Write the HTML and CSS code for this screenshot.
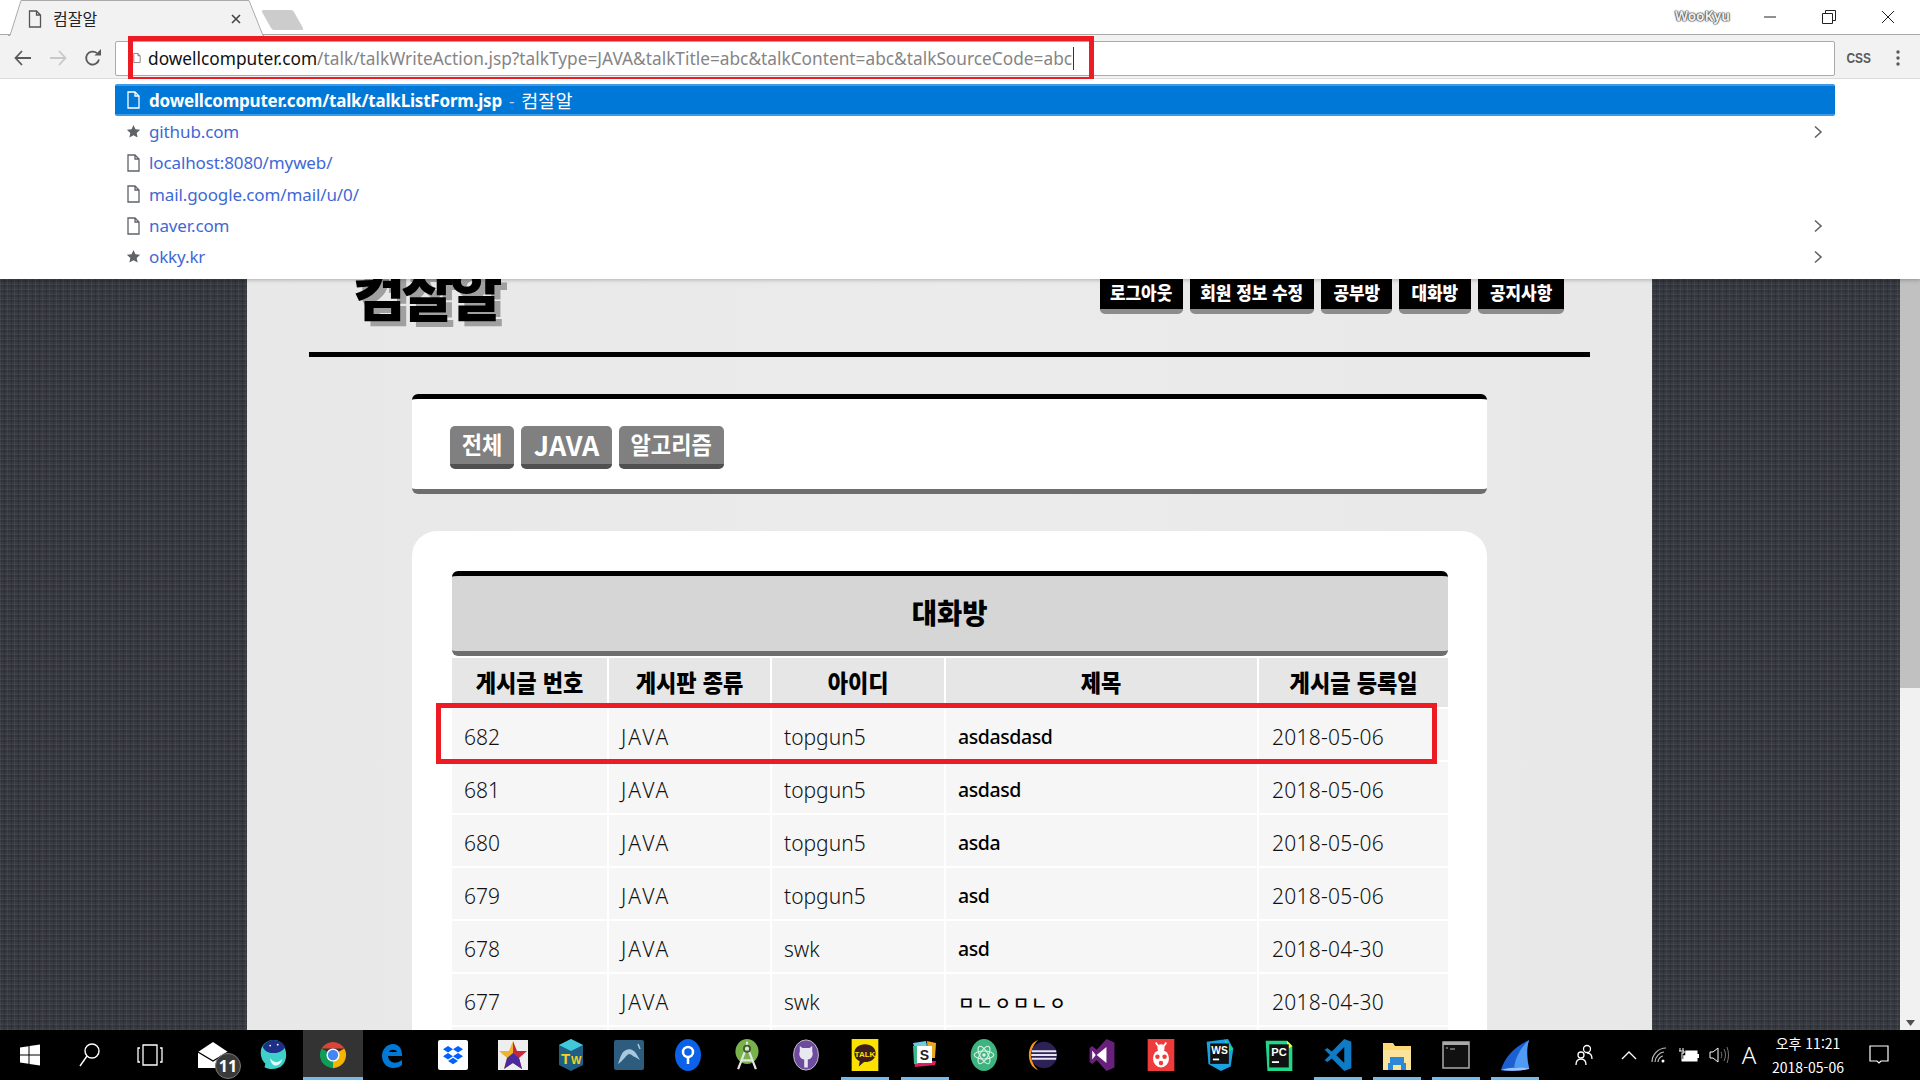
FILE: index.html
```html
<!DOCTYPE html>
<html lang="ko">
<head>
<meta charset="utf-8">
<title>컴잘알</title>
<link rel="stylesheet" href="styles.css">
</head>
<body>
<svg class="defs" width="0" height="0">
  <symbol id="page" viewBox="0 0 14 18"><path d="M1.5 1h7l4 4v12h-11z M8.5 1v4h4" fill="none" stroke="currentColor" stroke-width="1.3"/></symbol>
  <symbol id="star" viewBox="0 0 16 16"><path d="M8 1l2.1 4.6 5 .5-3.7 3.4 1 5L8 12l-4.4 2.5 1-5L.9 6.1l5-.5z" fill="#5f6368"/></symbol>
  <symbol id="chev" viewBox="0 0 10 14"><path d="M2 1.5L8 7l-6 5.5" fill="none" stroke="#5f6368" stroke-width="1.6"/></symbol>
</svg>

<header class="chrome">
  <div class="titlebar">
    <div class="tab">
      <svg class="tab-shape" width="256" height="36" viewBox="0 0 256 36"><path d="M0 35.5h2L13 .5h228l14 35h1" fill="#f2f2f2" stroke="#aaa"/></svg>
      <svg class="tab-icon" width="14" height="18"><use href="#page"/></svg>
      <span class="tab-title">컴잘알</span>
      <svg class="tab-close" width="10" height="10" viewBox="0 0 10 10"><path d="M1 1l8 8M9 1l-8 8" stroke="#444" stroke-width="1.6"/></svg>
    </div>
    <svg class="newtab" width="44" height="22" viewBox="0 0 44 22"><path d="M2 1h28q2 0 3 2l9 16q.5 2-2 2H13q-2 0-3-2L1 3q-.5-2 1-2z" fill="#ccc"/></svg>
    <div class="winctl">
      <span class="user">WooKyu</span>
      <svg class="ctl" width="14" height="14" viewBox="0 0 14 14"><path d="M1 7h12" stroke="#222"/></svg>
      <svg class="ctl" width="14" height="14" viewBox="0 0 14 14"><path d="M.5 3.5h10v10H.5zM3.5 3.5v-3h10v10h-3" fill="none" stroke="#222"/></svg>
      <svg class="ctl" width="14" height="14" viewBox="0 0 14 14"><path d="M1 1l12 12M13 1L1 13" stroke="#222"/></svg>
    </div>
  </div>
  <div class="toolbar">
    <div class="navbtns">
      <svg width="18" height="16" viewBox="0 0 18 16"><path d="M8 1L1.5 8 8 15M2 8h15" fill="none" stroke="#5a5a5a" stroke-width="1.8"/></svg>
      <svg width="18" height="16" viewBox="0 0 18 16"><path d="M10 1l6.5 7L10 15M16 8H1" fill="none" stroke="#c8c8c8" stroke-width="1.8"/></svg>
      <svg width="18" height="18" viewBox="0 0 18 18"><path d="M15 10.500A6.500 6.500 0 1 1 13 4.200" fill="none" stroke="#5a5a5a" stroke-width="1.8"/><path d="M10.500 6.500H17V0z" fill="#5a5a5a"/></svg>
    </div>
    <div class="omnibox">
      <svg class="omni-icon" width="14" height="18"><use href="#page"/></svg>
      <span class="url"><span class="host">dowellcomputer.com</span>/talk/talkWriteAction.jsp?talkType=JAVA&amp;talkTitle=abc&amp;talkContent=abc&amp;talkSourceCode=abc</span><span class="caret"></span>
    </div>
    <span class="ext">CSS</span>
    <svg class="menu" width="6" height="16" viewBox="0 0 6 16"><circle cx="3" cy="2" r="1.700" fill="#5a5a5a"/><circle cx="3" cy="8" r="1.700" fill="#5a5a5a"/><circle cx="3" cy="14" r="1.700" fill="#5a5a5a"/></svg>
  </div>
  <div class="redbox url-mark"></div>
</header>

<main class="viewport">
  <div class="page">
    <div class="panel">
      <div class="site-head">
        <h1 class="logo">컴잘알</h1>
        <nav class="topnav">
          <a class="nb w83"><span>로그아웃</span></a>
          <a class="nb w124"><span>회원 정보 수정</span></a>
          <a class="nb w71"><span>공부방</span></a>
          <a class="nb w72"><span>대화방</span></a>
          <a class="nb w86"><span>공지사항</span></a>
        </nav>
      </div>

      <section class="filter">
        <a class="fb w64"><span>전체</span></a>
        <a class="fb w91 latin"><span>JAVA</span></a>
        <a class="fb w105"><span>알고리즘</span></a>
      </section>

      <section class="board">
        <div class="board-title"><span>대화방</span></div>
        <table class="grid">
          <colgroup><col class="c1"><col class="c2"><col class="c3"><col class="c4"><col class="c5"></colgroup>
          <thead>
            <tr><th><span>게시글 번호</span></th><th><span>게시판 종류</span></th><th><span>아이디</span></th><th><span>제목</span></th><th><span>게시글 등록일</span></th></tr>
          </thead>
          <tbody>
            <tr><td>682</td><td>JAVA</td><td>topgun5</td><td class="subj">asdasdasd</td><td>2018-05-06</td></tr>
            <tr><td>681</td><td>JAVA</td><td>topgun5</td><td class="subj">asdasd</td><td>2018-05-06</td></tr>
            <tr><td>680</td><td>JAVA</td><td>topgun5</td><td class="subj">asda</td><td>2018-05-06</td></tr>
            <tr><td>679</td><td>JAVA</td><td>topgun5</td><td class="subj">asd</td><td>2018-05-06</td></tr>
            <tr><td>678</td><td>JAVA</td><td>swk</td><td class="subj">asd</td><td>2018-04-30</td></tr>
            <tr><td>677</td><td>JAVA</td><td>swk</td><td class="subj jamo">ㅁㄴㅇㅁㄴㅇ</td><td>2018-04-30</td></tr>
            <tr><td></td><td></td><td></td><td></td><td></td></tr>
          </tbody>
        </table>
      </section>
    </div>
    <div class="redbox row-mark"></div>
  </div>
  <aside class="scrollbar">
    <div class="thumb"></div>
    <svg class="arrow" width="9" height="6" viewBox="0 0 9 6"><path d="M0 0h9L4.500 6z" fill="#505050"/></svg>
  </aside>

  <div class="suggest">
    <div class="s-row sel"><svg class="s-icon" width="15" height="18"><use href="#page"/></svg><b>dowellcomputer.com/talk/talkListForm.jsp</b><i>-</i><span class="s-title">컴잘알</span></div>
    <div class="s-row"><svg class="s-icon" width="15" height="15"><use href="#star"/></svg><span>github.com</span><svg class="s-chev" width="10" height="14"><use href="#chev"/></svg></div>
    <div class="s-row"><svg class="s-icon pg" width="15" height="18"><use href="#page"/></svg><span>localhost:8080/myweb/</span></div>
    <div class="s-row"><svg class="s-icon pg" width="15" height="18"><use href="#page"/></svg><span>mail.google.com/mail/u/0/</span></div>
    <div class="s-row"><svg class="s-icon pg" width="15" height="18"><use href="#page"/></svg><span>naver.com</span><svg class="s-chev" width="10" height="14"><use href="#chev"/></svg></div>
    <div class="s-row"><svg class="s-icon" width="15" height="15"><use href="#star"/></svg><span>okky.kr</span><svg class="s-chev" width="10" height="14"><use href="#chev"/></svg></div>
  </div>
</main>

<footer class="taskbar">
  <div class="t-sys"><svg width="22" height="22" viewBox="0 0 22 22"><path d="M1 3.500l8.500-1.200v8.200H1zM10.500 2.100L21 .6v9.900H10.500zM1 11.500h8.500v8.200L1 18.500zM10.500 11.500H21v9.900l-10.500-1.500z" fill="#fff"/></svg></div>
  <div class="t-sys"><svg width="22" height="26" viewBox="0 0 22 26"><circle cx="13" cy="9" r="7" fill="none" stroke="#fff" stroke-width="1.400"/><path d="M8 14L1 24" stroke="#fff" stroke-width="1.400"/></svg></div>
  <div class="t-sys"><svg width="26" height="22" viewBox="0 0 26 22"><path d="M6 1h14v20H6z M3 4H1v14h2 M23 4h2v14h-2" fill="none" stroke="#fff" stroke-width="1.300"/></svg></div>
  <div class="t-apps">
    <div class="t-app mail"><svg width="30" height="28" viewBox="0 0 30 28"><path d="M0 11L15 1l15 10v16H0z" fill="#fff"/><path d="M0 11l15 9 15-9" fill="none" stroke="#000" stroke-width="1.400"/></svg><span class="badge">11</span></div>
    <div class="t-app"><svg width="30" height="34" viewBox="0 0 30 34"><path d="M2 14C2 6 9 1 16 1c8 0 13 7 13 16s-6 15-15 15c-3 0-6-1-8-2l1-4C3 23 2 18 2 14z" fill="#3fd0c9"/><path d="M4 8C7 3 12 1 16 1c6 0 10 3 12 8-4 5-8 6-13 6S6 13 4 8z" fill="#1d2f86"/><circle cx="12" cy="7" r="1" fill="#fff"/><circle cx="20" cy="6" r="1" fill="#fff"/><path d="M12 20c3 6 9 6 13 1-1 5-5 8-9 7-2-1-4-4-4-8z" fill="#dff"/></svg></div>
    <div class="t-app on cur"><svg width="30" height="30" viewBox="0 0 32 32"><path d="M3.900 9A14 14 0 0 1 28.100 9H16z" fill="#db4437"/><path d="M28.100 9A14 14 0 0 1 16 30L16 16z" fill="#f4b400"/><path d="M16 30A14 14 0 0 1 3.900 9L16 16z" fill="#0f9d58"/><circle cx="16" cy="16" r="7" fill="#fff"/><circle cx="16" cy="16" r="5.500" fill="#4285f4"/></svg></div>
    <div class="t-app"><svg width="26" height="28" viewBox="0 0 26 28"><path d="M4 15h18c.5-7-3-12-9-12C7 3 2 8 2 15c0 7 5 12 11 12 4 0 7-1 9-3v-5c-5 4-13 4-14 -4z M9 11c1-3 7-3 8 0z" fill="#0078d7" fill-rule="evenodd"/></svg></div>
    <div class="t-app"><svg width="30" height="30" viewBox="0 0 30 30"><rect width="30" height="30" rx="2" fill="#fff"/><path d="M10 6l5 3.300-5 3.300L5 9.300zM20 6l5 3.300-5 3.300-5-3.300zM10 13l5 3.300-5 3.300-5-3.300zM20 13l5 3.300-5 3.300-5-3.300zM15 17.800l5 3.200-5 3.200-5-3.200z" fill="#0061fe"/></svg></div>
    <div class="t-app"><svg width="30" height="30" viewBox="0 0 30 30"><rect width="30" height="30" fill="#eee"/><path d="M15 1l4 10h10l-8 7 3 11-9-6z" fill="#c8283c"/><path d="M15 1l-4 10H1l8 7-3 11 9-6z" fill="#f0b429"/><path d="M15 13l6 5 3 11-9-6-9 6 3-11z" fill="#4b2aa0"/></svg></div>
    <div class="t-app tw"><svg width="26" height="32" viewBox="0 0 26 32"><path d="M13 0l12 6v20l-12 6L1 26V6z" fill="#1f5f85"/><path d="M13 0l12 6-12 6L1 6z" fill="#42c8d8"/><text class="ic-t" x="3" y="25" font-size="15" fill="#f4d21f">T</text><text class="ic-t" x="13" y="25" font-size="11" fill="#f4d21f">W</text></svg></div>
    <div class="t-app"><svg width="30" height="30" viewBox="0 0 30 30"><rect width="30" height="30" rx="2" fill="#2d5c7f"/><path d="M4 24c2-5 3-12 8-14 5-2 9 1 11 5l3 5-5-3c-2 0-3-3-6-3-3 1-5 6-11 10z" fill="#a8c8dc"/><path d="M24 4l2 5" stroke="#a8c8dc" stroke-width="1.500"/></svg></div>
    <div class="t-app"><svg width="26" height="32" viewBox="0 0 26 32"><ellipse cx="13" cy="16" rx="13" ry="16" fill="#0b61e8"/><circle cx="13" cy="13" r="5" fill="none" stroke="#fff" stroke-width="2.500"/><path d="M13 18v7" stroke="#fff" stroke-width="2.500"/></svg></div>
    <div class="t-app"><svg width="26" height="36" viewBox="0 0 26 36"><ellipse cx="13" cy="14" rx="13" ry="14" fill="#78b24a"/><path d="M13 3v5M13 8L3 34M13 8l10 26M6 24h14" stroke="#e4e4e4" stroke-width="2.500" fill="none"/><circle cx="13" cy="11" r="3.500" fill="none" stroke="#3c5c28" stroke-width="2"/></svg></div>
    <div class="t-app"><svg width="30" height="36" viewBox="0 0 30 36"><ellipse cx="15" cy="18" rx="14" ry="17" fill="#6e4b9e" stroke="#ccc" stroke-width="1"/><path d="M8 8l3 2h8l3-2v6c2 5-2 9-5 9v9h-4v-9c-3 0-7-4-5-9z" fill="#e8e8f0"/></svg></div>
    <div class="t-app on"><svg width="30" height="36" viewBox="0 0 30 36"><rect width="30" height="36" fill="#fae100"/><path d="M15 6c-7 0-12 4-12 10 0 4 2 7 6 9l-1 6 6-5h1c7 0 12-4 12-10S22 6 15 6z" fill="#3c1e1e"/><text class="ic-t" x="15" y="20" font-size="9" fill="#fae100" text-anchor="middle">TALK</text></svg></div>
    <div class="t-app on"><svg width="24" height="30" viewBox="0 0 24 30"><path d="M0 3l13-2 1 5H1z" fill="#6ecadc"/><path d="M14 1l9 2-1 15h-7z" fill="#e9a820"/><path d="M2 27l20 -2 1-4H1z" fill="#e01e5a"/><path d="M0 6h5v18H1z" fill="#3eb890"/><rect x="4" y="6" width="15" height="17" fill="#fff"/><text class="ic-t" x="11.500" y="20" font-size="14" fill="#222" text-anchor="middle">S</text></svg></div>
    <div class="t-app"><svg width="30" height="36" viewBox="0 0 30 36"><ellipse cx="15" cy="18" rx="15" ry="18" fill="#3eb37f"/><g fill="none" stroke="#d8f2e4" stroke-width="1.300"><ellipse cx="15" cy="18" rx="11" ry="4.500"/><ellipse cx="15" cy="18" rx="11" ry="4.500" transform="rotate(60 15 18)"/><ellipse cx="15" cy="18" rx="11" ry="4.500" transform="rotate(120 15 18)"/></g><circle cx="15" cy="18" r="2" fill="#d8f2e4"/></svg></div>
    <div class="t-app"><svg width="30" height="34" viewBox="0 0 30 34"><path d="M10 1C3 3 0 10 0 17s3 14 10 16C5 29 3 23 3 17S5 5 10 1z" fill="#f7941e"/><circle cx="16" cy="17" r="14" fill="#2c2255"/><path d="M3 13h26M2.500 17h27M3 21h26" stroke="#e6e3f2" stroke-width="2"/></svg></div>
    <div class="t-app"><svg width="28" height="36" viewBox="0 0 28 36"><path d="M19 0l9 4v28l-9 4L8 24l-5 4-3-2V10l3-2 5 4z" fill="#68217a"/><path d="M19 9v18L8 18zM3 13l4 5-4 5z" fill="#fff"/></svg></div>
    <div class="t-app"><svg width="30" height="36" viewBox="0 0 30 36"><rect width="30" height="36" fill="#ef3b3b"/><ellipse cx="15" cy="22" rx="9" ry="10" fill="#fff"/><circle cx="15" cy="10" r="4" fill="#fff"/><path d="M9 4l3 4M21 4l-3 4" stroke="#fff" stroke-width="2"/><circle cx="11" cy="20" r="2.500" fill="#ef3b3b"/><circle cx="19" cy="20" r="2.500" fill="#ef3b3b"/><circle cx="15" cy="27" r="2.500" fill="#ef3b3b"/></svg></div>
    <div class="t-app"><svg width="30" height="36" viewBox="0 0 30 36"><path d="M0 3l24-3 6 11-3 20-11 5L2 28z" fill="#1ba1e2"/><path d="M20 0l10 11-6 4z" fill="#21d789"/><rect x="4" y="5" width="21" height="23" fill="#111"/><text class="ic-t" x="14.500" y="17" font-size="11.500" fill="#fff" text-anchor="middle">WS</text><rect x="7" y="22" width="7" height="2" fill="#fff"/></svg></div>
    <div class="t-app"><svg width="30" height="36" viewBox="0 0 30 36"><path d="M0 2h24l6 6v28H2z" fill="#21d789"/><path d="M24 2l6 6-6 4z" fill="#fcf84a"/><rect x="4" y="6" width="22" height="26" fill="#111"/><text class="ic-t" x="15" y="19" font-size="12.500" fill="#fff" text-anchor="middle">PC</text><rect x="7" y="25" width="8" height="2" fill="#fff"/></svg></div>
    <div class="t-app on"><svg width="30" height="36" viewBox="0 0 30 36"><path d="M22 0l8 3v30l-8 3L8 22l-5 4-3-2 6-6-6-6 3-2 5 4z" fill="#0f7ac6"/><path d="M22 9v18l-9-9z" fill="#000"/></svg></div>
    <div class="t-app on part"><svg width="28" height="30" viewBox="0 0 28 30"><path d="M0 3h10l2 3h16v24H0z" fill="#fdd877"/><path d="M0 10h28v20H0z" fill="#fbe39c"/><path d="M7 17h14v6h2v7h-5v-5h-8v5H5v-7h2z" fill="#2b88d8"/></svg></div>
    <div class="t-app on part"><svg width="28" height="28" viewBox="0 0 28 28"><rect x="1" y="1" width="26" height="26" fill="#111" stroke="#aaa" stroke-width="1.500"/><rect x="1" y="1" width="26" height="3" fill="#aaa"/><path d="M4 7h2M8 8h5" stroke="#bbb"/></svg></div>
    <div class="t-app on part"><svg width="30" height="34" viewBox="0 0 30 34"><path d="M0 33C4 20 14 8 30 1c-3 8-2 20 0 30-8 3-20 4-30 2z" fill="#1c5fd0"/><path d="M30 1C22 8 16 18 14 30l16 1c-3-10-3-22 0-30z" fill="#4f9af2"/><path d="M0 33c10-3 20-3 30-2v1c-10 2-20 2-30 1z" fill="#9cc4f5"/></svg></div>
  </div>
  <div class="tray">
    <div class="t-people"><svg width="18" height="22" viewBox="0 0 18 22"><circle cx="12" cy="5" r="3.500" fill="none" stroke="#fff" stroke-width="1.300"/><circle cx="6" cy="11" r="3" fill="#000" stroke="#fff" stroke-width="1.300"/><path d="M1 21c0-4 2-6 5-6s5 2 5 6M12 9c3 0 5 2 5 6" fill="none" stroke="#fff" stroke-width="1.300"/></svg></div>
    <div class="t-tray"><svg width="16" height="10" viewBox="0 0 16 10"><path d="M1 9l7-7 7 7" fill="none" stroke="#fff" stroke-width="1.300"/></svg></div>
    <div class="t-tray"><svg width="16" height="16" viewBox="0 0 16 16"><g fill="none" stroke="#bbb" stroke-width="1.200"><path d="M1 15C1 8 7 1 15 1"/><path d="M4 15c0-5 5-10 9-10"/><path d="M7 15c0-3 3-6 5-6"/></g><circle cx="12" cy="14" r="1.500" fill="#fff"/></svg></div>
    <div class="t-tray"><svg width="20" height="14" viewBox="0 0 20 14"><rect x="3" y="3" width="15" height="10" fill="#fff" stroke="#fff"/><rect x="18" y="6" width="2" height="4" fill="#fff"/><path d="M1 0v3M4 0v3M0 3h5v3H3v5" stroke="#000" stroke-width="2.500" fill="none"/><path d="M1 0v3M4 0v3M0 3h5v2H3v6" stroke="#fff" fill="none"/></svg></div>
    <div class="t-tray"><svg width="20" height="18" viewBox="0 0 20 18"><path d="M1 6h3l5-4v14l-5-4H1z" fill="none" stroke="#fff"/><path d="M12 6c1 2 1 4 0 6M15 3c2 4 2 8 0 12M18 1c2 5 2 11 0 16" fill="none" stroke="#777"/></svg></div>
    <div class="t-tray t-a">A</div>
    <div class="clock"><div>오후 11:21</div><div>2018-05-06</div></div>
    <div class="t-note"><svg width="20" height="20" viewBox="0 0 20 20"><path d="M1 1h18v15h-7l-2 2-2-2H1z" fill="none" stroke="#fff" stroke-width="1.200"/></svg></div>
  </div>
</footer>
</body>
</html>
```
FILE: styles.css
```css
* { box-sizing: border-box; }
html, body { margin: 0; height: 100%; }
body {
  width: 1920px; height: 1080px; overflow: hidden;
  display: flex; flex-direction: column;
  font-family: "Noto Sans", "Noto Sans CJK KR", sans-serif;
  color: #111; background: #fff;
}
.defs { position: absolute; }

/* browser chrome */
.chrome { position: relative; height: 79px; flex: none; z-index: 5; }
.titlebar { height: 35px; display: flex; background: #fff; border-bottom: 1px solid #aaa; }
.tab { position: relative; width: 256px; height: 36px; margin-left: 8px; flex: none; z-index: 1; }
.tab-shape { position: absolute; left: 0; top: 0; }
.tab-icon { position: absolute; left: 20px; top: 10px; color: #555; }
.tab-title { position: absolute; left: 45px; top: 6px; font: 16px/24px "Noto Sans CJK KR", sans-serif; color: #222; }
.tab-close { position: absolute; left: 223px; top: 14px; }
.newtab { margin: 9px 0 0 -3px; }
.winctl { margin-left: auto; display: flex; align-items: center; height: 34px; }
.user { font: bold 13.500px/1 "Noto Sans", sans-serif; color: #eee; text-shadow: 0 0 1px #222, 0 0 1px #222, 0 0 2px #333; margin-right: 33px; }
.ctl { margin-right: 45px; }
.ctl:last-child { margin-right: 25px; }

.toolbar { height: 44px; background: #f2f2f2; border-bottom: 1px solid #dcdcdc; display: flex; align-items: center; }
.navbtns { width: 115px; display: flex; align-items: center; gap: 17px; padding-left: 14px; margin-top: 2px; }
.omnibox { width: 1720px; height: 35px; background: #fff; border: 1px solid #aaa; border-radius: 2px; display: flex; align-items: center; padding-left: 17px; margin-top: 3px; }
.omni-icon { color: #666; width: 8px; margin-right: 7px; flex: none; }
.url { font-size: 17.300px; color: #858585; white-space: nowrap; }
.host { color: #111; }
.caret { width: 1px; height: 23px; background: #333; margin-left: 1px; }
.ext { width: 20px; margin-left: 10px; font: bold 14px/1 "Liberation Sans", sans-serif; color: #5a5a5a; transform: scaleX(.85); margin-top: 2px; }
.menu { margin-left: 30px; margin-top: 2px; }

.redbox { position: absolute; border: 5px solid #ed1c24; z-index: 20; pointer-events: none; }
.url-mark { left: 128px; top: 36px; width: 966px; height: 46px; }
.row-mark { left: 436px; top: 624px; width: 1001px; height: 61px; }

/* page */
.viewport { position: relative; flex: 1; min-height: 0; display: flex; overflow: hidden; }
.page {
  position: relative; flex: 1; min-width: 0; overflow: hidden;
  background-color: #383a42;
  background-image:
    repeating-linear-gradient(90deg, rgba(255,255,255,.05) 0 1px, transparent 1px 4px, rgba(0,0,0,.12) 4px 5px, transparent 5px 7px),
    repeating-linear-gradient(0deg, rgba(255,255,255,.04) 0 1px, transparent 1px 3px, rgba(0,0,0,.1) 3px 5px);
}
.panel { width: 1405px; margin-left: 247px; height: 1100px; background: linear-gradient(90deg, #e8e8e8, #ebebeb 50%, #e8e8e8); }
.site-head { width: 1281px; height: 278px; margin: 0 auto; border-bottom: 5px solid #000; display: flex; align-items: flex-end; justify-content: space-between; padding: 0 26px 38px 44px; }
.logo { margin: 0 0 -6px; font: 900 57px/1 "Noto Sans CJK KR", sans-serif; color: #000; text-shadow: 6px 5px 0 #a0a0a0; letter-spacing: -4px; }
.topnav { display: flex; gap: 7px; }
.nb { height: 60px; background: #000; border-bottom: 5px solid #8c8c8c; border-radius: 5px; display: flex; align-items: flex-end; justify-content: center; padding-bottom: 5px; color: #fff; font: 900 18px/24px "Noto Sans CJK KR", sans-serif; white-space: nowrap; }
.nb span { display: inline-block; transform: scaleX(.94); }
.w83 { width: 83px; } .w124 { width: 124px; } .w71 { width: 71px; } .w72 { width: 72px; } .w86 { width: 86px; }

.filter { width: 1075px; height: 100px; margin: 37px auto 0; background: #fff; border-top: 5px solid #000; border-bottom: 5px solid #6e6e6e; border-radius: 6px; padding: 27px 0 0 38px; display: flex; gap: 7px; }
.fb { height: 43px; background: #808080; border-bottom: 5px solid #505050; border-radius: 5px; display: flex; align-items: center; justify-content: center; color: #fff; font: bold 24px/1 "Noto Sans CJK KR", sans-serif; white-space: nowrap; padding-bottom: 2px; }
.fb span { display: inline-block; transform: scaleX(.92); }
.fb.latin { font-size: 27px; }
.fb.latin span { transform: none; }
.w64 { width: 64px; } .w91 { width: 91px; } .w105 { width: 105px; }

.board { width: 1075px; margin: 37px auto 0; background: #fff; border-radius: 25px 25px 0 0; padding: 40px 39px 0 40px; height: 560px; }
.board-title { height: 85px; background: #d6d6d6; border-top: 5px solid #000; border-bottom: 5px solid #6e6e6e; border-radius: 6px; display: flex; align-items: center; justify-content: center; padding-bottom: 4px; font: 900 28px/1 "Noto Sans CJK KR", sans-serif; color: #000; }
.board-title span { display: inline-block; transform: scaleX(.98); }
.grid { width: 996px; table-layout: fixed; border-collapse: collapse; margin-top: 2px; }
.c1 { width: 156px; } .c2 { width: 163px; } .c3 { width: 174px; } .c4 { width: 313px; } .c5 { width: 190px; }
.grid th { height: 50px; background: #e6e6e6; border: 2px solid #fff; border-width: 0 2px 2px; padding: 0 0 2px; font: 900 24px/1 "Noto Sans CJK KR", sans-serif; color: #000; white-space: nowrap; }
.grid th span { display: inline-block; transform: scaleX(.92); }
.grid th:first-child, .grid td:first-child { border-left: 0; }
.grid th:last-child, .grid td:last-child { border-right: 0; }
.grid td { height: 53px; background: #f6f6f6; border: 2px solid #fff; padding: 4px 0 0 12px; font-size: 21px; font-weight: 300; color: #111; white-space: nowrap; }
.grid td:nth-child(2) { letter-spacing: 2px; }
.grid td:last-child { letter-spacing: .25px; padding-left: 13px; }
.grid td.subj { font-size: 19.500px; font-weight: 500; color: #000; letter-spacing: -.4px; padding-left: 12px; }
.grid td.jamo { font: 500 18px/1 "Noto Sans CJK KR", sans-serif; letter-spacing: 1.700px; }

.scrollbar { width: 20px; flex: none; background: #f1f1f1; display: flex; flex-direction: column; align-items: center; padding-bottom: 4px; }
.thumb { width: 20px; height: 609px; background: #c1c1c1; }
.arrow { margin-top: auto; }

/* omnibox suggestions */
.suggest { position: absolute; left: 0; top: 0; width: 100%; height: 200px; background: #fff; box-shadow: 0 1px 4px rgba(0,0,0,.25); padding: 5px 0 0 115px; z-index: 10; }
.s-row { width: 1720px; height: 31.300px; display: flex; align-items: center; padding: 0 12px 0 11px; font-size: 17px; letter-spacing: -.12px; color: #3f68d6; white-space: nowrap; }
.s-icon { flex: none; margin-right: 8px; color: #5f6368; }
.s-row.sel { height: 32px; background: #0078d7; border-top: 2px solid #3e9ae4; border-bottom: 2px solid #3e9ae4; border-radius: 2px; color: #fff; }
.sel .s-icon { color: #fff; }
.sel b { font-weight: 700; letter-spacing: -.2px; }
.sel i { font-style: normal; margin: 0 7px; opacity: .7; }
.s-title { font: 18.500px/1 "Noto Sans CJK KR", sans-serif; letter-spacing: 0; }
.s-chev { margin-left: auto; }

/* taskbar */
.taskbar { height: 50px; flex: none; background: #000; display: flex; position: relative; z-index: 30; color: #fff; }
.t-sys { width: 60px; flex: none; display: flex; align-items: center; justify-content: center; }
.t-apps { display: flex; margin-left: 3px; }
.t-app { position: relative; width: 59.100px; height: 50px; flex: none; display: flex; align-items: center; justify-content: center; }
.t-app:nth-child(-n+6) { width: 60px; }
.t-app.tw { width: 56.500px; }
.t-app svg { max-height: 32px; }
.t-app.on { background: linear-gradient(#76b9ed, #76b9ed) center bottom / 48px 3px no-repeat; }
.t-app.cur { background-color: #333; background-size: 100% 3px; }
.ic-t { font-family: "Liberation Sans", sans-serif; font-weight: 700; }
.badge { position: absolute; left: 32px; top: 23px; width: 26px; height: 26px; border-radius: 50%; background: #3a3a3a; border: 1px solid #777; font: bold 16px/24px "Noto Sans", sans-serif; text-align: center; color: #fff; }
.tray { margin-left: auto; display: flex; align-items: center; padding-right: 9px; }
.t-people { width: 40px; margin-right: 10px; display: flex; justify-content: center; }
.t-tray { width: 30px; display: flex; justify-content: center; }
.t-a { font: 300 24px/1 "Noto Sans", sans-serif; }
.clock { width: 78px; margin-left: 5px; text-align: center; font: 14px/24px "Noto Sans CJK KR", sans-serif; white-space: nowrap; }
.t-note { width: 64px; display: flex; justify-content: center; }
```
